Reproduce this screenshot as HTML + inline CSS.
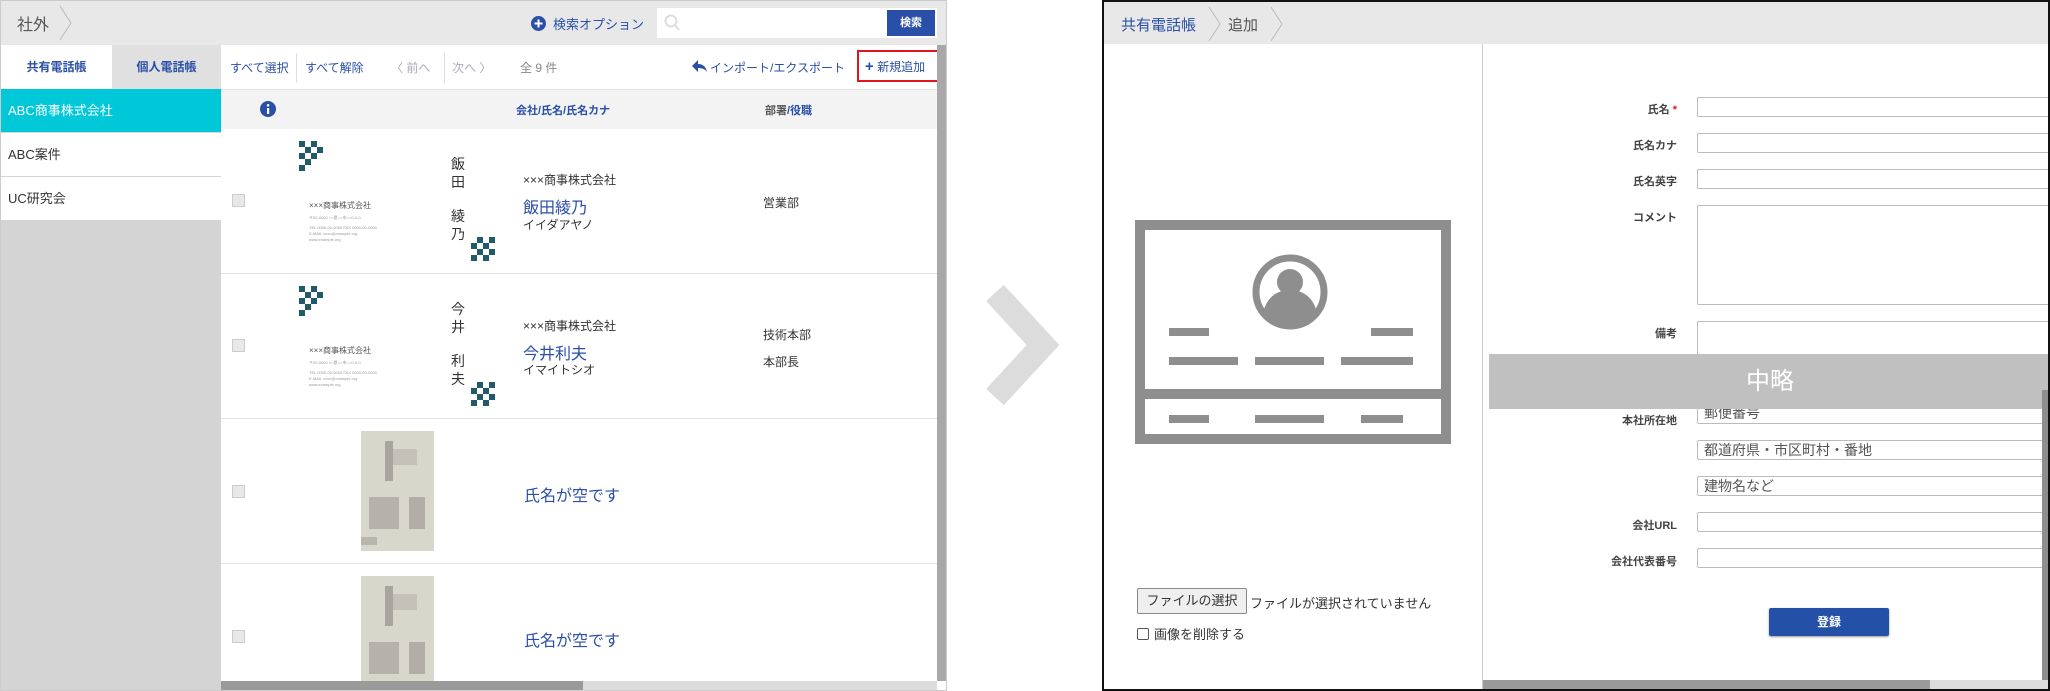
<!DOCTYPE html>
<html><head><meta charset="utf-8"><style>
*{box-sizing:border-box;margin:0;padding:0}
body{width:2050px;height:691px;background:#fff;position:relative;overflow:hidden;font-family:"Liberation Sans","Noto Sans CJK JP",sans-serif;color:#333}
.a{position:absolute;white-space:nowrap}
.blue{color:#2a4fa8}
.inp{position:absolute;left:1699px;width:360px;border:1px solid #bbb;border-radius:2px;background:#fff;font-size:14px;color:#555;padding-left:6px}
.lbl{position:absolute;right:371px;font-size:11px;font-weight:bold;color:#444;text-align:right}
</style></head><body>

<!-- LEFT PANEL -->
<div class="a" style="left:0;top:0;width:947px;height:691px;border:1px solid #ccc;overflow:hidden">
  <div class="a" style="left:0;top:0;width:947px;height:44px;background:#e8e8e8"></div>
  <div class="a" style="left:16px;top:10px;font-size:16px;color:#555">社外</div>
  <svg class="a" style="left:58px;top:4px" width="14" height="36"><polyline points="1,1 12,18 1,35" fill="none" stroke="#bbb" stroke-width="1"/></svg>
  <svg class="a" style="left:530px;top:15px" width="15" height="15"><circle cx="7.5" cy="7.5" r="7.5" fill="#2a4fa8"/><path d="M7.5 3.5v8M3.5 7.5h8" stroke="#fff" stroke-width="2"/></svg>
  <div class="a blue" style="left:552px;top:13px;font-size:13px">検索オプション</div>
  <div class="a" style="left:656px;top:7px;width:280px;height:30px;background:#fff"></div>
  <svg class="a" style="left:663px;top:13px" width="16" height="18"><circle cx="7" cy="7" r="5.5" fill="none" stroke="#ddd" stroke-width="2"/><path d="M11 11l4 5" stroke="#ddd" stroke-width="2"/></svg>
  <div class="a" style="left:886px;top:9px;width:48px;height:26px;background:#2a4fa8;color:#fff;font-size:11px;font-weight:bold;text-align:center;line-height:26px">検索</div>

  <div class="a" style="left:0;top:44px;width:220px;height:647px;background:#d4d4d4"></div>
  <div class="a" style="left:0;top:44px;width:111px;height:44px;background:#fff;font-size:12px;font-weight:bold;text-align:center;line-height:44px" ><span class="blue">共有電話帳</span></div>
  <div class="a" style="left:111px;top:44px;width:109px;height:44px;background:#e0e0e0;font-size:12px;font-weight:bold;text-align:center;line-height:44px"><span class="blue">個人電話帳</span></div>
  <div class="a" style="left:0;top:88px;width:220px;height:43px;background:#00c8d8;color:#fff;font-size:13px;line-height:43px;padding-left:7px">ABC商事株式会社</div>
  <div class="a" style="left:0;top:132px;width:220px;height:43px;background:#fff;font-size:13px;line-height:43px;padding-left:7px">ABC案件</div>
  <div class="a" style="left:0;top:176px;width:220px;height:43px;background:#fff;font-size:13px;line-height:43px;padding-left:7px">UC研究会</div>

  <div class="a blue" style="left:229px;top:58px;font-size:12px">すべて選択</div>
  <div class="a" style="left:295px;top:52px;width:1px;height:30px;background:#ddd"></div>
  <div class="a blue" style="left:304px;top:58px;font-size:12px">すべて解除</div>
  <div class="a" style="left:390px;top:58px;font-size:12px;color:#aab">〈 前へ</div>
  <div class="a" style="left:443px;top:52px;width:1px;height:30px;background:#ddd"></div>
  <div class="a" style="left:451px;top:58px;font-size:12px;color:#aab">次へ 〉</div>
  <div class="a" style="left:519px;top:58px;font-size:12px;color:#888">全 9 件</div>
  <svg class="a" style="left:690px;top:58px" width="16" height="14"><path d="M7 1L1 7l6 6V9c4 0 7 1 9 4-1-5-4-8-9-8z" fill="#2a4fa8"/></svg>
  <div class="a blue" style="left:709px;top:58px;font-size:12px">インポート/エクスポート</div>
  <div class="a" style="left:856px;top:49px;width:82px;height:32px;border:2px solid #e4141e"></div>
  <div class="a blue" style="left:864px;top:57px;font-size:12px"><b style="font-size:15px">+</b> 新規追加</div>

  <div class="a" style="left:220px;top:88px;width:716px;height:40px;background:#f3f3f3;border-top:1px solid #e2e2e2"></div>
  <svg class="a" style="left:259px;top:100px" width="16" height="16"><circle cx="8" cy="8" r="8" fill="#2a4fa8"/><rect x="7" y="7" width="2.2" height="6" fill="#fff"/><circle cx="8.1" cy="4.3" r="1.3" fill="#fff"/></svg>
  <div class="a blue" style="left:515px;top:101px;font-size:11px;font-weight:bold">会社/氏名/氏名カナ</div>
  <div class="a blue" style="left:764px;top:101px;font-size:11px;font-weight:bold"><span style="color:#555">部署</span>/役職</div>

  <div class="a" style="left:220px;top:272px;width:716px;height:1px;background:#e2e2e2"></div>
  <div class="a" style="left:220px;top:417px;width:716px;height:1px;background:#e2e2e2"></div>
  <div class="a" style="left:220px;top:562px;width:716px;height:1px;background:#e2e2e2"></div>

  <div class="a" style="left:231px;top:193px;width:13px;height:13px;border:1px solid #ccc;background:#e8e8e8"></div>
  <svg class="a" style="left:298px;top:140px" width="200" height="120">
    <g fill="#235a6a"><rect x="0" y="0" width="6" height="6"/><rect x="12" y="0" width="6" height="6"/><rect x="6" y="6" width="6" height="6"/><rect x="18" y="6" width="6" height="6"/><rect x="0" y="12" width="6" height="6"/><rect x="12" y="12" width="6" height="6"/><rect x="6" y="18" width="6" height="6"/><rect x="0" y="24" width="6" height="6"/></g>
    <g fill="#235a6a"><rect x="172" y="114" width="6" height="6"/><rect x="184" y="114" width="6" height="6"/><rect x="178" y="108" width="6" height="6"/><rect x="190" y="108" width="6" height="6"/><rect x="184" y="102" width="6" height="6"/><rect x="190" y="96" width="6" height="6"/><rect x="172" y="102" width="6" height="6"/><rect x="178" y="96" width="6" height="6"/></g>
    <text x="10" y="67" font-size="8" fill="#555">×××商事株式会社</text>
    <text x="10" y="78" font-size="4" fill="#999">〒00-0000 ○○県○○市○○0-0-0</text>
    <text x="10" y="88" font-size="4" fill="#999">TEL 0000-00-0000  FAX 0000-00-0000</text>
    <text x="10" y="94" font-size="4" fill="#999">E-MAIL xxxx@example.org</text>
    <text x="10" y="100" font-size="4" fill="#999">www.example.org</text>
    <text x="152" y="28" font-size="14" fill="#333">飯</text><text x="152" y="46" font-size="14" fill="#333">田</text>
    <text x="152" y="80" font-size="14" fill="#333">綾</text><text x="152" y="98" font-size="14" fill="#333">乃</text>
  </svg>
  <div class="a" style="left:522px;top:170px;font-size:12px">×××商事株式会社</div>
  <div class="a blue" style="left:522px;top:193px;font-size:16px">飯田綾乃</div>
  <div class="a" style="left:522px;top:215px;font-size:12px">イイダアヤノ</div>
  <div class="a" style="left:762px;top:193px;font-size:12px">営業部</div>

  <div class="a" style="left:231px;top:338px;width:13px;height:13px;border:1px solid #ccc;background:#e8e8e8"></div>
  <svg class="a" style="left:298px;top:285px" width="200" height="120">
    <g fill="#235a6a"><rect x="0" y="0" width="6" height="6"/><rect x="12" y="0" width="6" height="6"/><rect x="6" y="6" width="6" height="6"/><rect x="18" y="6" width="6" height="6"/><rect x="0" y="12" width="6" height="6"/><rect x="12" y="12" width="6" height="6"/><rect x="6" y="18" width="6" height="6"/><rect x="0" y="24" width="6" height="6"/></g>
    <g fill="#235a6a"><rect x="172" y="114" width="6" height="6"/><rect x="184" y="114" width="6" height="6"/><rect x="178" y="108" width="6" height="6"/><rect x="190" y="108" width="6" height="6"/><rect x="184" y="102" width="6" height="6"/><rect x="190" y="96" width="6" height="6"/><rect x="172" y="102" width="6" height="6"/><rect x="178" y="96" width="6" height="6"/></g>
    <text x="10" y="67" font-size="8" fill="#555">×××商事株式会社</text>
    <text x="10" y="78" font-size="4" fill="#999">〒00-0000 ○○県○○市○○0-0-0</text>
    <text x="10" y="88" font-size="4" fill="#999">TEL 0000-00-0000  FAX 0000-00-0000</text>
    <text x="10" y="94" font-size="4" fill="#999">E-MAIL xxxx@example.org</text>
    <text x="10" y="100" font-size="4" fill="#999">www.example.org</text>
    <text x="152" y="28" font-size="14" fill="#333">今</text><text x="152" y="46" font-size="14" fill="#333">井</text>
    <text x="152" y="80" font-size="14" fill="#333">利</text><text x="152" y="98" font-size="14" fill="#333">夫</text>
  </svg>
  <div class="a" style="left:522px;top:316px;font-size:12px">×××商事株式会社</div>
  <div class="a blue" style="left:522px;top:339px;font-size:16px">今井利夫</div>
  <div class="a" style="left:522px;top:360px;font-size:12px">イマイトシオ</div>
  <div class="a" style="left:762px;top:325px;font-size:12px">技術本部</div>
  <div class="a" style="left:762px;top:352px;font-size:12px">本部長</div>

  <div class="a" style="left:231px;top:484px;width:13px;height:13px;border:1px solid #ccc;background:#e8e8e8"></div>
  <svg class="a" style="left:360px;top:430px" width="73" height="120"><rect width="73" height="120" fill="#d8d7cc"/><rect x="24" y="10" width="8" height="40" fill="#a8a59e"/><rect x="32" y="18" width="24" height="16" fill="#c4c2b8"/><rect x="8" y="66" width="30" height="32" fill="#b4b2aa"/><rect x="48" y="66" width="16" height="32" fill="#b0aea6"/><rect x="0" y="106" width="16" height="8" fill="#b8b6ae"/></svg>
  <div class="a blue" style="left:523px;top:481px;font-size:16px">氏名が空です</div>

  <div class="a" style="left:231px;top:629px;width:13px;height:13px;border:1px solid #ccc;background:#e8e8e8"></div>
  <svg class="a" style="left:360px;top:575px" width="73" height="105"><rect width="73" height="120" fill="#d8d7cc"/><rect x="24" y="10" width="8" height="40" fill="#a8a59e"/><rect x="32" y="18" width="24" height="16" fill="#c4c2b8"/><rect x="8" y="66" width="30" height="32" fill="#b4b2aa"/><rect x="48" y="66" width="16" height="32" fill="#b0aea6"/></svg>
  <div class="a blue" style="left:523px;top:626px;font-size:16px">氏名が空です</div>

  <div class="a" style="left:936px;top:44px;width:11px;height:636px;background:#a8a8a8"></div>
  <div class="a" style="left:220px;top:680px;width:716px;height:11px;background:#dcdcdc"></div>
  <div class="a" style="left:220px;top:680px;width:362px;height:11px;background:#9a9a9a"></div>
</div>

<svg class="a" style="left:985px;top:285px" width="80" height="120"><polyline points="10,8 58,60 10,112" fill="none" stroke="#dcdcdc" stroke-width="24"/></svg>

<div class="a" style="left:1102px;top:0;width:948px;height:691px;border:2px solid #111;overflow:hidden">
  <div class="a" style="left:0;top:0;width:948px;height:42px;background:#e8e8e8"></div>
  <div class="a blue" style="left:17px;top:12px;font-size:15px">共有電話帳</div>
  <svg class="a" style="left:104px;top:4px" width="14" height="36"><polyline points="1,1 12,18 1,35" fill="none" stroke="#bbb"/></svg>
  <div class="a" style="left:124px;top:12px;font-size:15px;color:#555">追加</div>
  <svg class="a" style="left:166px;top:4px" width="14" height="36"><polyline points="1,1 12,18 1,35" fill="none" stroke="#bbb"/></svg>
  <div class="a" style="left:378px;top:42px;width:1px;height:650px;background:#ccc"></div>

  <svg class="a" style="left:31px;top:218px" width="316" height="224">
    <rect x="5" y="5" width="306" height="214" fill="none" stroke="#8e8e8e" stroke-width="10"/>
    <rect x="5" y="169" width="306" height="10" fill="#8e8e8e"/>
    <circle cx="155" cy="72" r="34" fill="none" stroke="#8e8e8e" stroke-width="7"/>
    <circle cx="155" cy="62" r="13" fill="#8e8e8e"/>
    <path d="M128 94c2-14 12-24 27-24s25 10 27 24c-7 7-17 11-27 11s-20-4-27-11z" fill="#8e8e8e"/>
    <rect x="34" y="108" width="40" height="8" fill="#8e8e8e"/><rect x="236" y="108" width="42" height="8" fill="#8e8e8e"/>
    <rect x="34" y="137" width="69" height="8" fill="#8e8e8e"/><rect x="120" y="137" width="69" height="8" fill="#8e8e8e"/><rect x="206" y="137" width="72" height="8" fill="#8e8e8e"/>
    <rect x="34" y="195" width="40" height="8" fill="#8e8e8e"/><rect x="120" y="195" width="69" height="8" fill="#8e8e8e"/><rect x="226" y="195" width="42" height="8" fill="#8e8e8e"/>
  </svg>

  <div class="a" style="left:33px;top:586px;width:110px;height:26px;border:1px solid #888;border-radius:2px;background:#efefef;font-size:13px;line-height:24px;text-align:center;color:#333">ファイルの選択</div>
  <div class="a" style="left:146px;top:591px;font-size:13px;color:#333">ファイルが選択されていません</div>
  <div class="a" style="left:33px;top:626px;width:12px;height:12px;border:1px solid #555;border-radius:2px"></div>
  <div class="a" style="left:50px;top:622px;font-size:13px;color:#333">画像を削除する</div>

  <div class="lbl" style="top:99px">氏名 <span style="color:#e4141e">*</span></div>
  <div class="lbl" style="top:135px">氏名カナ</div>
  <div class="lbl" style="top:171px">氏名英字</div>
  <div class="lbl" style="top:207px">コメント</div>
  <div class="lbl" style="top:323px">備考</div>
  <div class="lbl" style="top:410px">本社所在地</div>
  <div class="lbl" style="top:515px">会社URL</div>
  <div class="lbl" style="top:551px">会社代表番号</div>
  <div class="inp" style="left:593px;top:95px;height:20px"></div>
  <div class="inp" style="left:593px;top:131px;height:20px"></div>
  <div class="inp" style="left:593px;top:167px;height:20px"></div>
  <div class="inp" style="left:593px;top:203px;height:100px"></div>
  <div class="inp" style="left:593px;top:319px;height:60px"></div>
  <div class="inp" style="left:593px;top:400px;height:22px;line-height:20px">郵便番号</div>
  <div class="inp" style="left:593px;top:438px;height:20px;line-height:18px">都道府県・市区町村・番地</div>
  <div class="inp" style="left:593px;top:474px;height:20px;line-height:18px">建物名など</div>
  <div class="inp" style="left:593px;top:510px;height:20px"></div>
  <div class="inp" style="left:593px;top:546px;height:20px"></div>
  <div class="a" style="left:385px;top:352px;width:562px;height:55px;background:#c0c0c0;color:#fff;font-size:24px;text-align:center;line-height:55px">中略</div>
  <div class="a" style="left:665px;top:606px;width:120px;height:28px;background:#2450a8;border-radius:2px;color:#fff;font-size:12px;font-weight:bold;text-align:center;line-height:28px;box-shadow:0 1px 2px #999">登録</div>

  <div class="a" style="left:938px;top:388px;width:8px;height:290px;background:#8e8e8e"></div>
  <div class="a" style="left:379px;top:678px;width:570px;height:11px;background:#dcdcdc"></div>
  <div class="a" style="left:379px;top:678px;width:447px;height:11px;background:#9a9a9a"></div>
</div>
</body></html>
